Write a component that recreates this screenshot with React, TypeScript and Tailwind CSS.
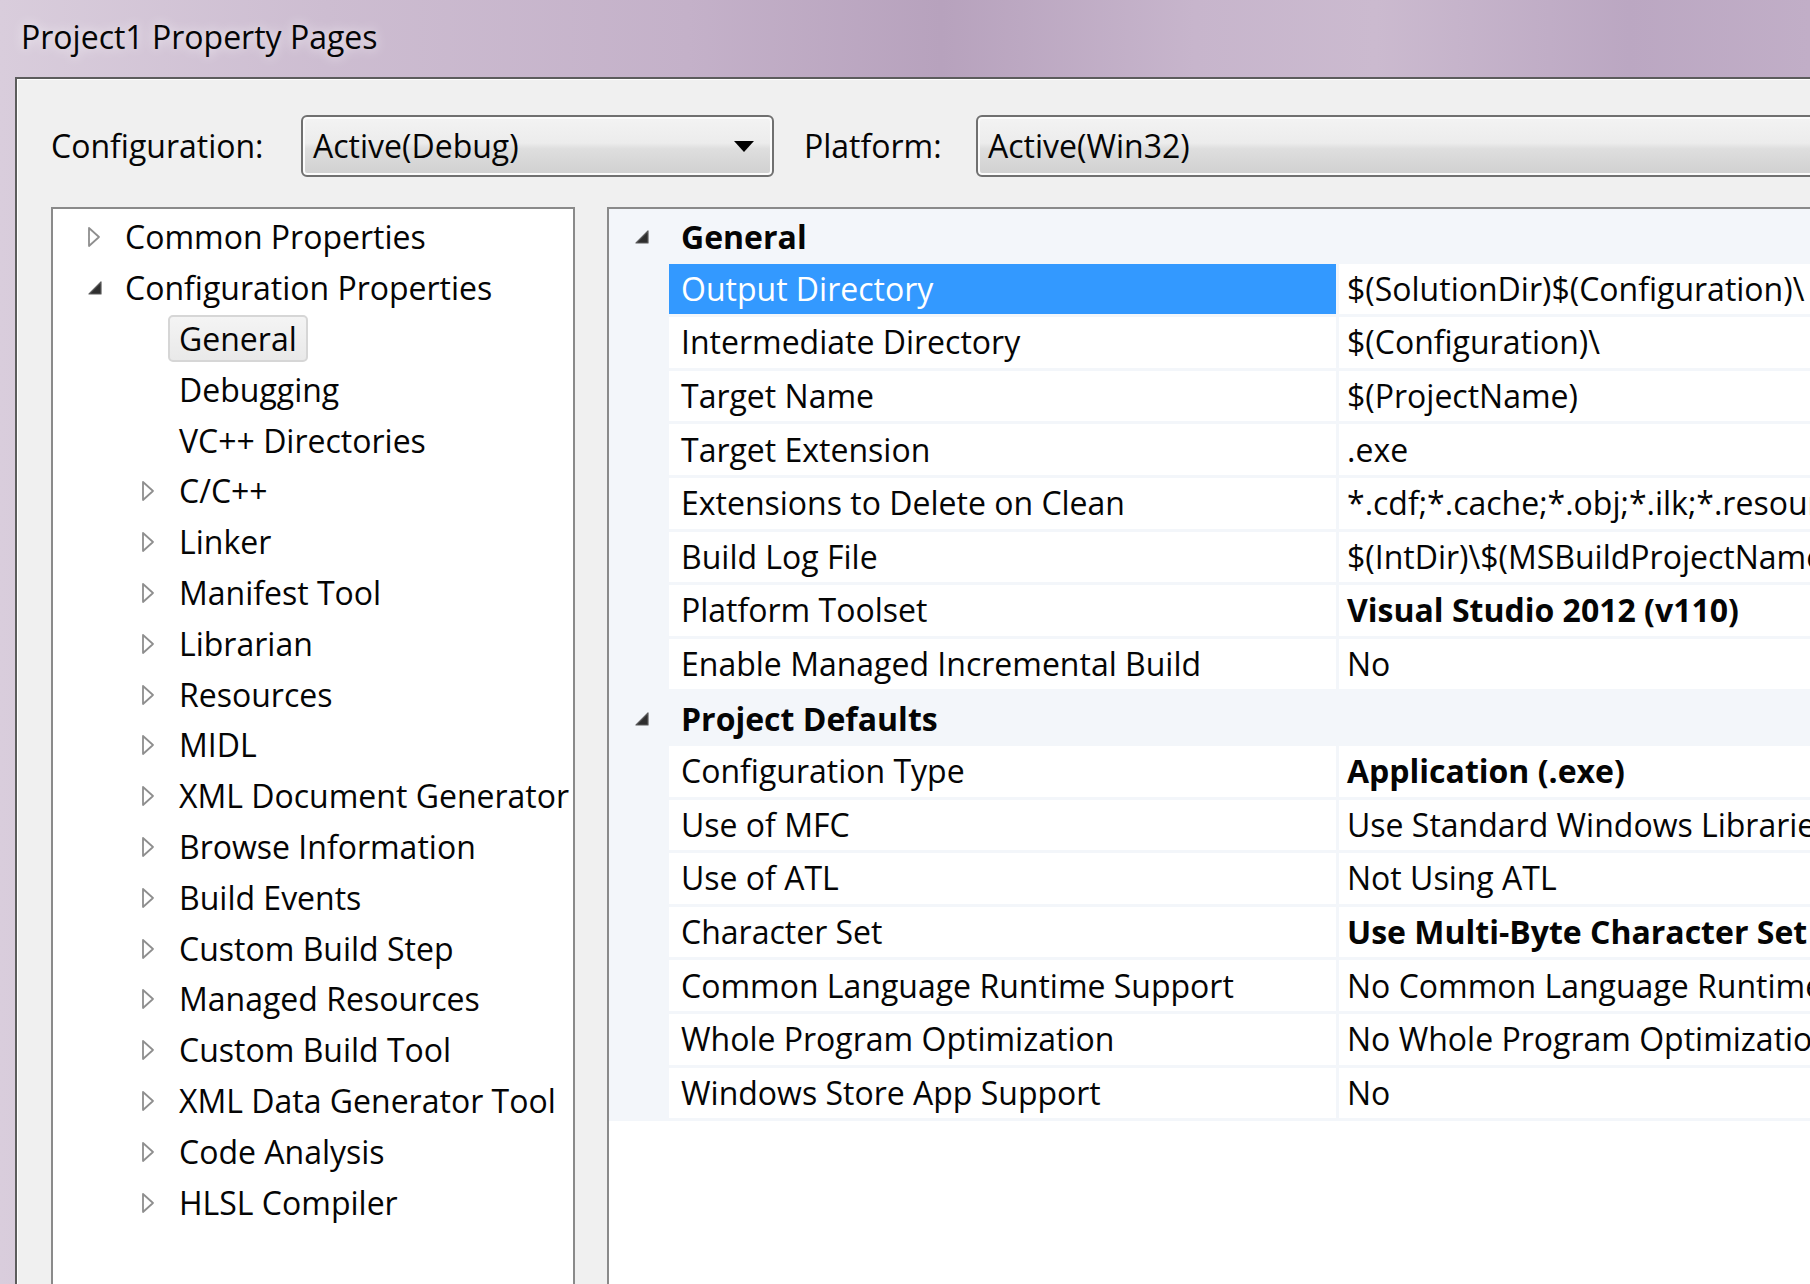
import React from "react";

type TreeItem = { label: string; level: 0 | 1; state: "collapsed" | "expanded" | "none"; selected?: boolean };

const treeItems: TreeItem[] = [
  { label: "Common Properties", level: 0, state: "collapsed" },
  { label: "Configuration Properties", level: 0, state: "expanded" },
  { label: "General", level: 1, state: "none", selected: true },
  { label: "Debugging", level: 1, state: "none" },
  { label: "VC++ Directories", level: 1, state: "none" },
  { label: "C/C++", level: 1, state: "collapsed" },
  { label: "Linker", level: 1, state: "collapsed" },
  { label: "Manifest Tool", level: 1, state: "collapsed" },
  { label: "Librarian", level: 1, state: "collapsed" },
  { label: "Resources", level: 1, state: "collapsed" },
  { label: "MIDL", level: 1, state: "collapsed" },
  { label: "XML Document Generator", level: 1, state: "collapsed" },
  { label: "Browse Information", level: 1, state: "collapsed" },
  { label: "Build Events", level: 1, state: "collapsed" },
  { label: "Custom Build Step", level: 1, state: "collapsed" },
  { label: "Managed Resources", level: 1, state: "collapsed" },
  { label: "Custom Build Tool", level: 1, state: "collapsed" },
  { label: "XML Data Generator Tool", level: 1, state: "collapsed" },
  { label: "Code Analysis", level: 1, state: "collapsed" },
  { label: "HLSL Compiler", level: 1, state: "collapsed" },
];

type Row =
  | { kind: "cat"; label: string }
  | { kind: "prop"; name: string; value: string; bold?: boolean; selected?: boolean };

const rows: Row[] = [
  { kind: "cat", label: "General" },
  { kind: "prop", name: "Output Directory", value: "$(SolutionDir)$(Configuration)\\", selected: true },
  { kind: "prop", name: "Intermediate Directory", value: "$(Configuration)\\" },
  { kind: "prop", name: "Target Name", value: "$(ProjectName)" },
  { kind: "prop", name: "Target Extension", value: ".exe" },
  {
    kind: "prop",
    name: "Extensions to Delete on Clean",
    value: "*.cdf;*.cache;*.obj;*.ilk;*.resources;*.tlb;*.tli;*.tlh;*.tmp;*.rsp;*.pgc;*.pgd;*.meta;*.tlog;*.manifest;*.res;*.pch;*.exp;*.idb;*.rep;*.xdc;*.pdb",
  },
  { kind: "prop", name: "Build Log File", value: "$(IntDir)\\$(MSBuildProjectName).log" },
  { kind: "prop", name: "Platform Toolset", value: "Visual Studio 2012 (v110)", bold: true },
  { kind: "prop", name: "Enable Managed Incremental Build", value: "No" },
  { kind: "cat", label: "Project Defaults" },
  { kind: "prop", name: "Configuration Type", value: "Application (.exe)", bold: true },
  { kind: "prop", name: "Use of MFC", value: "Use Standard Windows Libraries" },
  { kind: "prop", name: "Use of ATL", value: "Not Using ATL" },
  { kind: "prop", name: "Character Set", value: "Use Multi-Byte Character Set", bold: true },
  { kind: "prop", name: "Common Language Runtime Support", value: "No Common Language Runtime Support" },
  { kind: "prop", name: "Whole Program Optimization", value: "No Whole Program Optimization" },
  { kind: "prop", name: "Windows Store App Support", value: "No" },
];

function CollapsedGlyph() {
  return (
    <svg width="14" height="22" viewBox="0 0 14 22">
      <polygon points="2,2 12,11 2,20" fill="#ffffff" stroke="#8e8e8e" strokeWidth="1.8" strokeLinejoin="round" />
    </svg>
  );
}

function ExpandedGlyph() {
  return (
    <svg width="16" height="16" viewBox="0 0 16 16">
      <polygon points="14,2 14,14 2,14" fill="#2e2e2e" stroke="#5a5a5a" strokeWidth="1.2" strokeLinejoin="round" />
    </svg>
  );
}

function Dropdown({ text, width, arrow }: { text: string; width: string; arrow: boolean }) {
  return (
    <div
      className={`flex h-[62px] shrink-0 items-center justify-between rounded-[6px] border-2 border-[#707070] bg-[linear-gradient(to_bottom,#f3f3f3_0%,#ececec_45%,#dedede_55%,#d0d0d0_100%)] pl-[10px] pr-[18px] shadow-[inset_0_0_0_2px_#fbfbfb] ${width}`}
    >
      <span>{text}</span>
      {arrow && (
        <svg width="20" height="11" viewBox="0 0 20 11">
          <polygon points="0,0 20,0 10,11" fill="#000000" />
        </svg>
      )}
    </div>
  );
}

export default function App() {
  return (
    <div className="flex h-[1284px] w-[1810px] flex-col overflow-hidden bg-[linear-gradient(90deg,#d9cddc_0%,#cdbdd1_18%,#c4b1c9_38%,#b7a2bd_52%,#c7b5cc_66%,#cbbacf_76%,#bba7c2_90%,#c1aec7_100%)] font-['Open_Sans',sans-serif] text-[32px] text-[#050505]">
      {/* Title bar */}
      <div className="flex h-[77px] shrink-0 items-center pb-[4px] pl-[21px]">
        <span className="text-[32px] [text-shadow:0_0_12px_rgba(255,255,255,0.9)]">Project1 Property Pages</span>
      </div>

      {/* Frame + dialog body */}
      <div className="flex min-h-0 flex-1 pl-[15px]">
        <div className="flex min-w-0 flex-1 flex-col border-l-2 border-t-2 border-[#5c5c5c] bg-[#f0f0f0] pl-[34px] shadow-[inset_1px_1px_0_#ffffff]">
          {/* Configuration row */}
          <div className="mt-[36px] flex shrink-0 items-center">
            <span className="w-[250px] shrink-0">Configuration:</span>
            <Dropdown text="Active(Debug)" width="w-[473px]" arrow />
            <span className="ml-[30px] w-[172px] shrink-0">Platform:</span>
            <Dropdown text="Active(Win32)" width="w-[900px]" arrow={false} />
          </div>

          {/* Panels */}
          <div className="mt-[30px] flex min-h-0 flex-1">
            {/* Tree */}
            <div className="h-[1100px] w-[524px] shrink-0 overflow-hidden border-2 border-[#8a8a8a] bg-white pt-[3px]">
              {treeItems.map((it) => (
                <div
                  key={it.label}
                  className={`flex h-[50.8px] items-center whitespace-nowrap ${it.level === 0 ? "pl-[34px]" : "pl-[88px]"}`}
                >
                  <div className="flex w-[38px] shrink-0 items-center">
                    {it.state === "collapsed" && <CollapsedGlyph />}
                    {it.state === "expanded" && <ExpandedGlyph />}
                  </div>
                  {it.selected ? (
                    <span className="-ml-[11px] flex h-[47px] items-center rounded-[5px] border-2 border-[#d6d6d6] bg-[linear-gradient(to_bottom,#f4f4f4,#e9e9e9)] px-[9px]">
                      {it.label}
                    </span>
                  ) : (
                    <span>{it.label}</span>
                  )}
                </div>
              ))}
            </div>

            {/* Property grid */}
            <div className="ml-[32px] h-[1100px] w-[1300px] shrink-0 overflow-hidden border-2 border-[#8a8a8a] bg-white">
              <div className="bg-[#f3f6fa] pt-[1px]">
                {rows.map((r, i) =>
                  r.kind === "cat" ? (
                    <div key={i} className="flex h-[53.6px] items-center">
                      <div className="flex w-[60px] shrink-0 items-center pl-[25px]">
                        <ExpandedGlyph />
                      </div>
                      <span className="pl-[12px] font-bold">{r.label}</span>
                    </div>
                  ) : (
                    <div key={i} className="flex h-[53.6px] whitespace-nowrap pb-[3px]">
                      <div className="w-[60px] shrink-0" />
                      <div
                        className={`flex w-[667px] shrink-0 items-center pl-[12px] ${r.selected ? "bg-[#3399ff] text-white" : "bg-white"}`}
                      >
                        {r.name}
                      </div>
                      <div className={`ml-[3px] flex flex-1 items-center bg-white pl-[8px] ${r.bold ? "font-bold" : ""}`}>
                        {r.value}
                      </div>
                    </div>
                  )
                )}
              </div>
            </div>
          </div>
        </div>
      </div>
    </div>
  );
}
